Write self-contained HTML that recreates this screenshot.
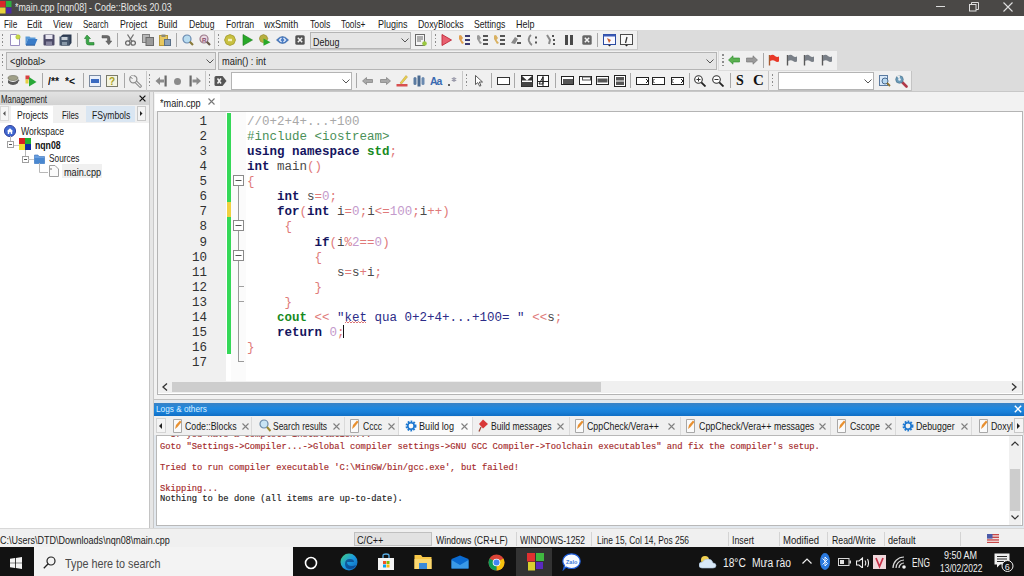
<!DOCTYPE html><html><head><meta charset="utf-8"><style>
*{margin:0;padding:0;box-sizing:border-box}
html,body{width:1024px;height:576px;overflow:hidden;background:#f0f0f0;font-family:"Liberation Sans",sans-serif;font-size:10px;color:#000}
.a{position:absolute}
.t{position:absolute;white-space:pre;line-height:1;transform-origin:0 0}
.code{font-family:"Liberation Mono",monospace;font-size:12.5px}
.kw{color:#14145e;font-weight:bold}
.op{color:#e07a7a}
.nm{color:#c49acc}
.id{color:#4a4a4a}
.cm{color:#a8a8a8}
.pp{color:#4a9058}
.uk{color:#178a1e;font-weight:bold}
.st{color:#2c2c88}
.sq{text-decoration:underline wavy #d04040;text-decoration-thickness:1px;text-underline-offset:2px}
.ln{position:absolute;width:50px;text-align:right;font-family:"Liberation Mono",monospace;font-size:12.5px;color:#303030;white-space:pre;line-height:15.06px}
.log{font-family:"Liberation Mono",monospace;font-size:8.8px;font-weight:normal;line-height:10.5px;color:#a42a2a;white-space:pre;-webkit-text-stroke:0.15px currentColor}
</style></head><body>
<div class="a" style="left:0px;top:0px;width:1024px;height:15.6px;background:#4a4846;"></div>
<svg class="a" style="left:0px;top:1px" width="12" height="13" viewBox="0 0 12 13"><rect x="0" y="0" width="5.5" height="6" fill="#d8282a"/><rect x="6" y="0" width="5.5" height="6" fill="#2cb040"/><rect x="0" y="6.5" width="5.5" height="6" fill="#e8d23a"/><rect x="6" y="6.5" width="5.5" height="6" fill="#4a2aa0"/></svg>
<div class="t" style="left:15.0px;top:2px;font-size:11px;color:#e8e8e8;transform:scaleX(0.808);">*main.cpp [nqn08] - Code::Blocks 20.03</div>
<div class="a" style="left:936px;top:6px;width:9px;height:1px;background:#dddddd;"></div>
<svg class="a" style="left:969px;top:2px" width="10" height="10" viewBox="0 0 10 10"><rect x="0.5" y="2.5" width="6.5" height="6.5" fill="none" stroke="#ddd"/><path d="M2.5 2.5V0.5H9.5V7.5H7" fill="none" stroke="#ddd"/></svg>
<svg class="a" style="left:1003px;top:2px" width="10" height="10" viewBox="0 0 10 10"><path d="M0.5 0.5L9.5 9.5M9.5 0.5L0.5 9.5" stroke="#e0e0e0" stroke-width="1.1"/></svg>
<div class="a" style="left:0px;top:15.6px;width:1024px;height:14.4px;background:#ffffff;"></div>
<div class="t" style="left:3.5px;top:18.5px;font-size:10.5px;color:#1a1a1a;transform:scaleX(0.781);">File</div>
<div class="t" style="left:27.2px;top:18.5px;font-size:10.5px;color:#1a1a1a;transform:scaleX(0.829);">Edit</div>
<div class="t" style="left:52.7px;top:18.5px;font-size:10.5px;color:#1a1a1a;transform:scaleX(0.852);">View</div>
<div class="t" style="left:82.6px;top:18.5px;font-size:10.5px;color:#1a1a1a;transform:scaleX(0.764);">Search</div>
<div class="t" style="left:119.5px;top:18.5px;font-size:10.5px;color:#1a1a1a;transform:scaleX(0.832);">Project</div>
<div class="t" style="left:158.0px;top:18.5px;font-size:10.5px;color:#1a1a1a;transform:scaleX(0.835);">Build</div>
<div class="t" style="left:188.8px;top:18.5px;font-size:10.5px;color:#1a1a1a;transform:scaleX(0.824);">Debug</div>
<div class="t" style="left:225.7px;top:18.5px;font-size:10.5px;color:#1a1a1a;transform:scaleX(0.83);">Fortran</div>
<div class="t" style="left:264.44px;top:18.5px;font-size:10.5px;color:#1a1a1a;transform:scaleX(0.861);">wxSmith</div>
<div class="t" style="left:310.0px;top:18.5px;font-size:10.5px;color:#1a1a1a;transform:scaleX(0.829);">Tools</div>
<div class="t" style="left:340.8px;top:18.5px;font-size:10.5px;color:#1a1a1a;transform:scaleX(0.799);">Tools+</div>
<div class="t" style="left:377.6px;top:18.5px;font-size:10.5px;color:#1a1a1a;transform:scaleX(0.856);">Plugins</div>
<div class="t" style="left:417.6px;top:18.5px;font-size:10.5px;color:#1a1a1a;transform:scaleX(0.833);">DoxyBlocks</div>
<div class="t" style="left:474.2px;top:18.5px;font-size:10.5px;color:#1a1a1a;transform:scaleX(0.825);">Settings</div>
<div class="t" style="left:516.4px;top:18.5px;font-size:10.5px;color:#1a1a1a;transform:scaleX(0.856);">Help</div>
<div class="a" style="left:0px;top:30px;width:1024px;height:62px;background:#dcdcdc;"></div>
<div class="a" style="left:0px;top:31px;width:638px;height:19px;background:#f0f0f0;border-bottom:1px solid #c8c8c8;border-right:1px solid #c8c8c8"></div>
<div class="a" style="left:1.5px;top:34.0px;width:1.5px;height:1.5px;background:#8c8c8c;"></div>
<div class="a" style="left:1.5px;top:37.5px;width:1.5px;height:1.5px;background:#8c8c8c;"></div>
<div class="a" style="left:1.5px;top:41.0px;width:1.5px;height:1.5px;background:#8c8c8c;"></div>
<div class="a" style="left:1.5px;top:44.5px;width:1.5px;height:1.5px;background:#8c8c8c;"></div>
<svg class="a" style="left:9px;top:34px" width="12" height="12" viewBox="0 0 12 12"><path d="M1.5 0.5H7.5L10.5 3.5V11.5H1.5Z" fill="#fff" stroke="#9a8ec0"/><circle cx="9" cy="3" r="2.2" fill="#c8d84a" stroke="#a8b830" stroke-width=".6"/></svg>
<svg class="a" style="left:25px;top:34px" width="13" height="12" viewBox="0 0 13 12"><path d="M0.5 2.5H4.5L5.5 3.5H10.5V5H3L0.5 11Z" fill="#5a9ad8"/><path d="M0.5 11L3 5H12.5L10 11Z" fill="#3a7cc8"/><path d="M1 11.2H10" stroke="#2a5a98"/></svg>
<svg class="a" style="left:43px;top:34px" width="12" height="12" viewBox="0 0 12 12"><rect x="0.5" y="0.5" width="11" height="11" rx="1" fill="#4d4b68"/><rect x="2.5" y="1" width="7" height="4" fill="#e8e6f0"/><rect x="3" y="7.5" width="6" height="4" fill="#8886a0"/></svg>
<svg class="a" style="left:59px;top:34px" width="13" height="12" viewBox="0 0 13 12"><path d="M2 2L4 0.5H12.5V9L10.5 11.5H2Z" fill="#2c3a50"/><path d="M0.5 2.5H10.5V11.5H0.5Z" fill="#48586e"/><rect x="2.5" y="3" width="6" height="3" fill="#c8d0d8"/><rect x="3" y="8" width="5" height="3" fill="#8898a8"/></svg>
<div class="a" style="left:77px;top:33px;width:1px;height:14px;background:#a8a8a8;"></div>
<svg class="a" style="left:84px;top:34px" width="11" height="12" viewBox="0 0 11 12"><path d="M3 1L0.5 4.5H2.2V8.5Q2.2 11 5 11H10V8.5H5.2Q4.8 8.5 4.8 8V4.5H6.5Z" fill="#3aa848" stroke="#267a30" stroke-width=".6"/></svg>
<svg class="a" style="left:101px;top:34px" width="11" height="12" viewBox="0 0 11 12"><path d="M1 1.5H6Q9 1.5 9 4.5V7H10.8L7.8 10.8L4.8 7H6.5V4.8Q6.5 4 5.8 4H1Z" fill="#6a6a6a" stroke="#505050" stroke-width=".5"/></svg>
<div class="a" style="left:117px;top:33px;width:1px;height:14px;background:#a8a8a8;"></div>
<svg class="a" style="left:125px;top:34px" width="11" height="12" viewBox="0 0 11 12"><circle cx="2.8" cy="9" r="2.2" fill="none" stroke="#6a6a6a" stroke-width="1.3"/><circle cx="8.2" cy="9" r="2.2" fill="none" stroke="#6a6a6a" stroke-width="1.3"/><path d="M4 7.5L8.5 0.5M7 7.5L2.5 0.5" stroke="#707070" stroke-width="1.3"/></svg>
<svg class="a" style="left:142px;top:34px" width="12" height="12" viewBox="0 0 12 12"><rect x="0.5" y="0.5" width="7" height="8" fill="#b8b8b8" stroke="#808080"/><rect x="4" y="3.5" width="7.5" height="8" fill="#9a9a9a" stroke="#6a6a6a"/></svg>
<svg class="a" style="left:159px;top:34px" width="12" height="12" viewBox="0 0 12 12"><rect x="0.5" y="1.5" width="8" height="10" fill="#e8c860" stroke="#b89838"/><rect x="2.5" y="0.5" width="4" height="2.5" fill="#8a8a7a"/><rect x="5.5" y="5.5" width="6" height="6" fill="#8aa0b8" stroke="#5a7088"/></svg>
<div class="a" style="left:176px;top:33px;width:1px;height:14px;background:#a8a8a8;"></div>
<svg class="a" style="left:182px;top:34px" width="12" height="12" viewBox="0 0 12 12"><circle cx="5" cy="5" r="4" fill="#b8dcf0" stroke="#6a8ab0" stroke-width="1.2"/><path d="M7.8 7.8L11 11" stroke="#8a7a3a" stroke-width="2.2"/></svg>
<svg class="a" style="left:199px;top:34px" width="12" height="12" viewBox="0 0 12 12"><circle cx="5" cy="5" r="4" fill="#e8d8e0" stroke="#9a7a8a" stroke-width="1.2"/><text x="3" y="7.5" font-size="6" font-weight="bold" fill="#8a4a6a" font-family="Liberation Sans">R</text><path d="M7.8 7.8L11 11" stroke="#6a5a4a" stroke-width="2.2"/></svg>
<div class="a" style="left:214px;top:31px;width:1px;height:18px;background:#c8c8c8;"></div>
<div class="a" style="left:217.5px;top:34.0px;width:1.5px;height:1.5px;background:#8c8c8c;"></div>
<div class="a" style="left:217.5px;top:37.5px;width:1.5px;height:1.5px;background:#8c8c8c;"></div>
<div class="a" style="left:217.5px;top:41.0px;width:1.5px;height:1.5px;background:#8c8c8c;"></div>
<div class="a" style="left:217.5px;top:44.5px;width:1.5px;height:1.5px;background:#8c8c8c;"></div>
<svg class="a" style="left:224px;top:34px" width="12" height="12" viewBox="0 0 12 12"><path d="M6 0.5L9.9 2.1L11.5 6L9.9 9.9L6 11.5L2.1 9.9L0.5 6L2.1 2.1Z" fill="#c8c040" stroke="#9a9020" stroke-width=".7"/><rect x="4" y="4.8" width="4" height="2.4" fill="#f4f0c0"/></svg>
<svg class="a" style="left:242px;top:34px" width="11" height="12" viewBox="0 0 11 12"><path d="M1 0.5L10.5 6L1 11.5Z" fill="#28a828" stroke="#1a7a1a" stroke-width=".6"/></svg>
<svg class="a" style="left:259px;top:34px" width="12" height="12" viewBox="0 0 12 12"><path d="M4.5 0.5L7.5 1.8L8.8 4.5L7.5 7.5L4.5 8.8L1.5 7.5L0.3 4.5L1.5 1.8Z" fill="#b8b040" stroke="#8a8020" stroke-width=".6"/><path d="M4.5 4.5L11.5 8.2L4.5 11.8Z" fill="#28a828"/></svg>
<svg class="a" style="left:276px;top:35px" width="13" height="10" viewBox="0 0 13 10"><path d="M0.5 5Q6.5 -2 12.5 5Q6.5 12 0.5 5Z" fill="#4a7cc4" stroke="#2a5a98" stroke-width=".6"/><path d="M5.5 3L3.5 5L5.5 7M7.5 3L9.5 5L7.5 7" fill="none" stroke="#eef4ff" stroke-width="1.1"/></svg>
<svg class="a" style="left:295px;top:35px" width="10" height="10" viewBox="0 0 10 10"><rect x="0.3" y="0.3" width="9.4" height="9.4" rx="1.5" fill="#555"/><path d="M2.8 2.8L7.2 7.2M7.2 2.8L2.8 7.2" stroke="#f4f4f4" stroke-width="1.5"/></svg>
<div class="a" style="left:310px;top:32px;width:101px;height:17px;background:#e5e5e5;border:1px solid #b4b4b4"></div>
<div class="t" style="left:312.9px;top:36.5px;font-size:10.5px;color:#1a1a1a;transform:scaleX(0.853);">Debug</div>
<svg class="a" style="left:401px;top:38px" width="8" height="5" viewBox="0 0 8 5"><path d="M0.5 0.5L4 4L7.5 0.5" fill="none" stroke="#555" stroke-width="1"/></svg>
<svg class="a" style="left:415px;top:34px" width="12" height="12" viewBox="0 0 12 12"><rect x="0.5" y="0.5" width="9" height="11" fill="#f4f4f4" stroke="#6a6a6a"/><path d="M2 3H8M2 5H8M2 7H6" stroke="#6a6a6a"/><circle cx="9.5" cy="9.5" r="2.3" fill="#9ac840"/></svg>
<div class="a" style="left:431px;top:31px;width:1px;height:18px;background:#c8c8c8;"></div>
<div class="a" style="left:434.5px;top:34.0px;width:1.5px;height:1.5px;background:#8c8c8c;"></div>
<div class="a" style="left:434.5px;top:37.5px;width:1.5px;height:1.5px;background:#8c8c8c;"></div>
<div class="a" style="left:434.5px;top:41.0px;width:1.5px;height:1.5px;background:#8c8c8c;"></div>
<div class="a" style="left:434.5px;top:44.5px;width:1.5px;height:1.5px;background:#8c8c8c;"></div>
<svg class="a" style="left:441px;top:34px" width="11" height="12" viewBox="0 0 11 12"><path d="M1 0.5L10.5 6L1 11.5Z" fill="#e86070" stroke="#c02838" stroke-width=".9"/></svg>
<svg class="a" style="left:458px;top:34px" width="13" height="12" viewBox="0 0 13 12"><path d="M1 1.5L3 1L5 4L3.5 6L6 9L4 10L1 5Z" fill="#e0a050"/><rect x="7" y="1" width="5" height="2" fill="#3a3a70"/><rect x="7" y="5" width="5" height="2" fill="#3a3a70"/><rect x="7" y="9" width="5" height="2" fill="#3a3a70"/></svg>
<svg class="a" style="left:476px;top:34px" width="13" height="12" viewBox="0 0 13 12"><path d="M1 1.5L3 1L5 4L3.5 6L6 9L4 10L1 5Z" fill="#9a9a9a"/><rect x="7" y="1" width="5" height="2" fill="#555"/><rect x="7" y="5" width="5" height="2" fill="#555"/><rect x="7" y="9" width="5" height="2" fill="#555"/></svg>
<svg class="a" style="left:493px;top:34px" width="13" height="12" viewBox="0 0 13 12"><path d="M1 1.5L3 1L5 4L3.5 6L6 9L4 10L1 5Z" fill="#d8b060"/><rect x="7" y="1" width="5" height="2" fill="#555"/><rect x="7" y="5" width="5" height="2" fill="#555"/><rect x="7" y="9" width="5" height="2" fill="#555"/></svg>
<svg class="a" style="left:510px;top:34px" width="12" height="12" viewBox="0 0 12 12"><path d="M1 9L5 3L8 5L5 10Z" fill="#8a8a8a"/><rect x="7" y="1" width="4" height="2" fill="#555"/><rect x="7" y="8" width="4" height="2" fill="#555"/></svg>
<svg class="a" style="left:527px;top:34px" width="12" height="12" viewBox="0 0 12 12"><path d="M4 1Q1 3 2 7Q3 10 5 11" fill="none" stroke="#8a8a8a" stroke-width="2"/><rect x="8" y="2.5" width="2" height="2" fill="#555"/><rect x="8" y="7.5" width="2" height="2" fill="#555"/></svg>
<svg class="a" style="left:545px;top:34px" width="12" height="12" viewBox="0 0 12 12"><path d="M2 1L5 6L4 10" fill="none" stroke="#8a8a8a" stroke-width="2"/><rect x="7" y="1" width="2" height="2" fill="#555"/><rect x="8" y="5" width="2" height="2" fill="#555"/><rect x="8" y="9" width="2" height="2" fill="#555"/></svg>
<svg class="a" style="left:564px;top:34px" width="10" height="12" viewBox="0 0 10 12"><rect x="1" y="1" width="3" height="10" fill="#4a4a4a"/><rect x="6" y="1" width="3" height="10" fill="#4a4a4a"/></svg>
<svg class="a" style="left:582px;top:35px" width="10" height="10" viewBox="0 0 10 10"><rect x="0.3" y="0.3" width="9.4" height="9.4" rx="1.5" fill="#666"/><path d="M2.8 2.8L7.2 7.2M7.2 2.8L2.8 7.2" stroke="#f4f4f4" stroke-width="1.5"/></svg>
<div class="a" style="left:597px;top:33px;width:1px;height:14px;background:#a8a8a8;"></div>
<svg class="a" style="left:603px;top:34px" width="13" height="13" viewBox="0 0 13 13"><rect x="0.5" y="0.5" width="12" height="10" fill="#f8f8ff" stroke="#2a4aa0"/><rect x="0.5" y="0.5" width="12" height="2" fill="#3a5ab8"/><path d="M4 4L8 6L6 9Z" fill="#c86030"/><path d="M5 11L6.5 12.5L8 11Z" fill="#222"/></svg>
<svg class="a" style="left:620px;top:34px" width="13" height="13" viewBox="0 0 13 13"><rect x="0.5" y="0.5" width="12" height="10" fill="#f8f8f8" stroke="#4a4a4a"/><path d="M7 3L5.5 9" stroke="#333" stroke-width="1.3"/><path d="M5 11L6.5 12.5L8 11Z" fill="#222"/></svg>
<div class="a" style="left:0px;top:51px;width:718px;height:20px;background:#f0f0f0;"></div>
<div class="a" style="left:1.5px;top:54.0px;width:1.5px;height:1.5px;background:#8c8c8c;"></div>
<div class="a" style="left:1.5px;top:57.5px;width:1.5px;height:1.5px;background:#8c8c8c;"></div>
<div class="a" style="left:1.5px;top:61.0px;width:1.5px;height:1.5px;background:#8c8c8c;"></div>
<div class="a" style="left:1.5px;top:64.5px;width:1.5px;height:1.5px;background:#8c8c8c;"></div>
<div class="a" style="left:6px;top:52px;width:210px;height:18px;background:#e5e5e5;border:1px solid #b4b4b4"></div>
<div class="t" style="left:9.7px;top:56px;font-size:10.5px;color:#1a1a1a;transform:scaleX(0.881);">&lt;global&gt;</div>
<svg class="a" style="left:206px;top:59px" width="8" height="5" viewBox="0 0 8 5"><path d="M0.5 0.5L4 4L7.5 0.5" fill="none" stroke="#555" stroke-width="1"/></svg>
<div class="a" style="left:218px;top:52px;width:499px;height:18px;background:#e5e5e5;border:1px solid #b4b4b4"></div>
<div class="t" style="left:222.4px;top:56px;font-size:10.5px;color:#1a1a1a;transform:scaleX(0.883);">main() : int</div>
<svg class="a" style="left:706px;top:59px" width="8" height="5" viewBox="0 0 8 5"><path d="M0.5 0.5L4 4L7.5 0.5" fill="none" stroke="#555" stroke-width="1"/></svg>
<div class="a" style="left:719px;top:51px;width:118px;height:19px;background:#f0f0f0;"></div>
<div class="a" style="left:722px;top:54.0px;width:1.5px;height:1.5px;background:#8c8c8c;"></div>
<div class="a" style="left:722px;top:57.5px;width:1.5px;height:1.5px;background:#8c8c8c;"></div>
<div class="a" style="left:722px;top:61.0px;width:1.5px;height:1.5px;background:#8c8c8c;"></div>
<div class="a" style="left:722px;top:64.5px;width:1.5px;height:1.5px;background:#8c8c8c;"></div>
<svg class="a" style="left:728px;top:55px" width="12" height="10" viewBox="0 0 12 10"><path d="M0.5 5L5 0.8V3H11.5V7H5V9.2Z" fill="#5ab050" stroke="#2a8a2a" stroke-width=".6"/></svg>
<svg class="a" style="left:746px;top:55px" width="12" height="10" viewBox="0 0 12 10"><path d="M11.5 5L7 0.8V3H0.5V7H7V9.2Z" fill="#9a9a9a" stroke="#707070" stroke-width=".6"/></svg>
<div class="a" style="left:763px;top:53px;width:1px;height:15px;background:#a8a8a8;"></div>
<svg class="a" style="left:768px;top:54px" width="12" height="12" viewBox="0 0 12 12"><path d="M1.5 11.5V1" stroke="#a85a30" stroke-width="1.4"/><path d="M2 1.5Q5 0 7 2Q9 3.5 11 2.5V7.5Q9 8.5 7 7Q5 5.5 2 7Z" fill="#e83828"/></svg>
<svg class="a" style="left:786px;top:54px" width="12" height="12" viewBox="0 0 12 12"><path d="M1.5 11.5V1" stroke="#5a5a5a" stroke-width="1.4"/><path d="M2 1.5Q5 0 7 2Q9 3.5 11 2.5V7.5Q9 8.5 7 7Q5 5.5 2 7Z" fill="#7a8088"/></svg>
<svg class="a" style="left:803px;top:54px" width="12" height="12" viewBox="0 0 12 12"><path d="M1.5 11.5V1" stroke="#5a5a5a" stroke-width="1.4"/><path d="M2 1.5Q5 0 7 2Q9 3.5 11 2.5V7.5Q9 8.5 7 7Q5 5.5 2 7Z" fill="#7a8088"/></svg>
<svg class="a" style="left:821px;top:54px" width="12" height="12" viewBox="0 0 12 12"><path d="M1.5 11.5V1" stroke="#5a5a5a" stroke-width="1.4"/><path d="M2 1.5Q5 0 7 2Q9 3.5 11 2.5V7.5Q9 8.5 7 7Q5 5.5 2 7Z" fill="#7a8088"/></svg>
<div class="a" style="left:0px;top:71px;width:912px;height:20px;background:#f0f0f0;border-bottom:1px solid #c0c0c0;border-right:1px solid #c4c4c4"></div>
<div class="a" style="left:1.5px;top:74.0px;width:1.5px;height:1.5px;background:#8c8c8c;"></div>
<div class="a" style="left:1.5px;top:77.5px;width:1.5px;height:1.5px;background:#8c8c8c;"></div>
<div class="a" style="left:1.5px;top:81.0px;width:1.5px;height:1.5px;background:#8c8c8c;"></div>
<div class="a" style="left:1.5px;top:84.5px;width:1.5px;height:1.5px;background:#8c8c8c;"></div>
<svg class="a" style="left:7px;top:75px" width="13" height="12" viewBox="0 0 13 12"><ellipse cx="6" cy="3" rx="5" ry="2.5" fill="#a0a088" stroke="#6a6a5a" stroke-width=".6"/><path d="M1 5Q6 9 11 5V8Q6 12 1 8Z" fill="#5a5a5a"/><path d="M11 4L12.5 5.5L11 7" fill="#6a6a6a"/></svg>
<svg class="a" style="left:25px;top:75px" width="12" height="12" viewBox="0 0 12 12"><rect x="0.5" y="0.5" width="4" height="4" fill="#d84040"/><rect x="0.5" y="4.5" width="3" height="4" fill="#e8d040"/><path d="M4 2L11.5 7L4 11.5Z" fill="#28a838"/></svg>
<div class="a" style="left:42px;top:73px;width:1px;height:15px;background:#a8a8a8;"></div>
<div class="t" style="left:48px;top:76px;font-size:11.5px;color:#111;transform:scaleX(0.9);font-weight:bold">/**</div>
<div class="t" style="left:65px;top:76px;font-size:11.5px;color:#111;transform:scaleX(0.9);font-weight:bold">*&lt;</div>
<div class="a" style="left:83px;top:73px;width:1px;height:15px;background:#a8a8a8;"></div>
<svg class="a" style="left:89px;top:75px" width="12" height="12" viewBox="0 0 12 12"><rect x="0.5" y="0.5" width="11" height="11" fill="#eaf0fa" stroke="#7a8aa0"/><rect x="2" y="4" width="8" height="4" fill="#3a6ac0"/></svg>
<svg class="a" style="left:106px;top:75px" width="12" height="12" viewBox="0 0 12 12"><rect x="0.5" y="0.5" width="11" height="11" fill="#f4f4e0" stroke="#7a7a6a"/><text x="3" y="10" font-size="10" font-weight="bold" fill="#a8a020" font-family="Liberation Sans">?</text></svg>
<div class="a" style="left:124px;top:73px;width:1px;height:15px;background:#a8a8a8;"></div>
<svg class="a" style="left:129px;top:75px" width="13" height="13" viewBox="0 0 13 13"><path d="M6.2 6.2L11.2 11.2" stroke="#8a8a8a" stroke-width="3.2" stroke-linecap="round"/><path d="M6.2 6.2L11.2 11.2" stroke="#f0f0f0" stroke-width="1.2" stroke-linecap="round"/><circle cx="4.3" cy="4.3" r="3.6" fill="#f0f0f0" stroke="#8a8a8a" stroke-width="1.2"/><path d="M4.3 4.3L1.5 1.2L4.8 0.3Z" fill="#f0f0f0"/><path d="M1.3 1.5L3.5 4" stroke="#8a8a8a" stroke-width="1"/></svg>
<div class="a" style="left:146px;top:71px;width:1px;height:20px;background:#c8c8c8;"></div>
<div class="a" style="left:148.5px;top:74.0px;width:1.5px;height:1.5px;background:#8c8c8c;"></div>
<div class="a" style="left:148.5px;top:77.5px;width:1.5px;height:1.5px;background:#8c8c8c;"></div>
<div class="a" style="left:148.5px;top:81.0px;width:1.5px;height:1.5px;background:#8c8c8c;"></div>
<div class="a" style="left:148.5px;top:84.5px;width:1.5px;height:1.5px;background:#8c8c8c;"></div>
<svg class="a" style="left:155px;top:75px" width="13" height="12" viewBox="0 0 13 12"><path d="M0.5 6L5 2V4.5H9V7.5H5V10Z" fill="#8a8a8a"/><rect x="9.5" y="0.5" width="2.2" height="11" fill="#6a6a6a"/></svg>
<svg class="a" style="left:173px;top:77px" width="9" height="9" viewBox="0 0 9 9"><circle cx="4.5" cy="4.5" r="3.5" fill="#8a8a8a"/></svg>
<svg class="a" style="left:189px;top:75px" width="13" height="12" viewBox="0 0 13 12"><rect x="0.5" y="0.5" width="2.2" height="11" fill="#6a6a6a"/><path d="M12 6L7.5 2V4.5H3.5V7.5H7.5V10Z" fill="#8a8a8a"/></svg>
<div class="a" style="left:205px;top:71px;width:1px;height:20px;background:#c8c8c8;"></div>
<div class="a" style="left:208.5px;top:74.0px;width:1.5px;height:1.5px;background:#8c8c8c;"></div>
<div class="a" style="left:208.5px;top:77.5px;width:1.5px;height:1.5px;background:#8c8c8c;"></div>
<div class="a" style="left:208.5px;top:81.0px;width:1.5px;height:1.5px;background:#8c8c8c;"></div>
<div class="a" style="left:208.5px;top:84.5px;width:1.5px;height:1.5px;background:#8c8c8c;"></div>
<svg class="a" style="left:214px;top:75px" width="13" height="12" viewBox="0 0 13 12"><path d="M0.5 2.5Q0.5 1 2 1H8.5L12.5 6L8.5 11H2Q0.5 11 0.5 9.5Z" fill="#555"/><path d="M3.5 3.5L7 8.5M7 3.5L3.5 8.5" stroke="#f0f0f0" stroke-width="1.5"/></svg>
<div class="a" style="left:231px;top:72px;width:121px;height:18px;background:#ffffff;border:1px solid #b4b4b4"></div>
<svg class="a" style="left:341.5px;top:79px" width="8" height="5" viewBox="0 0 8 5"><path d="M0.5 0.5L4 4L7.5 0.5" fill="none" stroke="#555" stroke-width="1"/></svg>
<div class="a" style="left:356px;top:73px;width:1px;height:15px;background:#a8a8a8;"></div>
<svg class="a" style="left:362px;top:76px" width="11" height="10" viewBox="0 0 11 10"><path d="M0.5 5L4.5 1.5V3.5H10.5V6.5H4.5V8.5Z" fill="#a8a8a8" stroke="#707070" stroke-width=".6"/></svg>
<svg class="a" style="left:380px;top:76px" width="11" height="10" viewBox="0 0 11 10"><path d="M10.5 5L6.5 1.5V3.5H0.5V6.5H6.5V8.5Z" fill="#a8a8a8" stroke="#707070" stroke-width=".6"/></svg>
<svg class="a" style="left:396px;top:75px" width="12" height="12" viewBox="0 0 12 12"><path d="M4 8L10 0.5L11.5 2L5.5 9Z" fill="#e8d050" stroke="#b89830" stroke-width=".5"/><rect x="0.5" y="9" width="11" height="2.5" fill="#d85050"/></svg>
<svg class="a" style="left:413px;top:75px" width="12" height="12" viewBox="0 0 12 12"><rect x="0.5" y="2" width="3" height="8" rx="1.5" fill="#5a7aa0"/><rect x="4.5" y="0.5" width="3" height="11" fill="#4a6a90"/><rect x="8.5" y="2" width="3" height="8" rx="1.5" fill="#6a8ab0"/></svg>
<div class="t" style="left:430px;top:76px;font-size:11px;color:#3a6ab0;transform:scaleX(0.95);font-weight:bold;letter-spacing:-1px">Aa</div>
<svg class="a" style="left:446px;top:75px" width="12" height="12" viewBox="0 0 12 12"><circle cx="3" cy="10" r="1" fill="#333"/><path d="M8 2V7M5.8 3.2L10.2 5.8M10.2 3.2L5.8 5.8" stroke="#9a9aaa" stroke-width="1.2"/></svg>
<div class="a" style="left:462px;top:71px;width:1px;height:20px;background:#c8c8c8;"></div>
<div class="a" style="left:465.5px;top:74.0px;width:1.5px;height:1.5px;background:#8c8c8c;"></div>
<div class="a" style="left:465.5px;top:77.5px;width:1.5px;height:1.5px;background:#8c8c8c;"></div>
<div class="a" style="left:465.5px;top:81.0px;width:1.5px;height:1.5px;background:#8c8c8c;"></div>
<div class="a" style="left:465.5px;top:84.5px;width:1.5px;height:1.5px;background:#8c8c8c;"></div>
<svg class="a" style="left:475px;top:75px" width="8" height="12" viewBox="0 0 8 12"><path d="M0.5 0.5V9.5L2.8 7.6L4.6 11.2L6 10.5L4.3 7H7.5Z" fill="#fff" stroke="#333" stroke-width=".8"/></svg>
<div class="a" style="left:491px;top:73px;width:1px;height:15px;background:#a8a8a8;"></div>
<svg class="a" style="left:497px;top:77px" width="13" height="8" viewBox="0 0 13 8"><rect x="0.5" y="0.5" width="12" height="7" fill="#fff" stroke="#333"/></svg>
<div class="a" style="left:514px;top:73px;width:1px;height:15px;background:#a8a8a8;"></div>
<svg class="a" style="left:521px;top:75px" width="12" height="12" viewBox="0 0 12 12"><rect x="0.5" y="0.5" width="11" height="11" fill="#fff" stroke="#222"/><path d="M0.5 0.5L6 5.5L11.5 0.5V5.5H0.5Z" fill="#333"/><rect x="0.5" y="7" width="11" height="4.5" fill="#444"/></svg>
<svg class="a" style="left:537px;top:75px" width="12" height="12" viewBox="0 0 12 12"><rect x="0.5" y="0.5" width="11" height="11" fill="#fff" stroke="#222"/><path d="M2 9L6 2V9ZM0.5 6.5H11.5M6 0.5V11.5" fill="none" stroke="#222"/></svg>
<div class="a" style="left:555px;top:73px;width:1px;height:15px;background:#a8a8a8;"></div>
<svg class="a" style="left:561px;top:75px" width="13" height="12" viewBox="0 0 13 12"><rect x="0.5" y="1.5" width="12" height="8" fill="#fff" stroke="#222"/><rect x="2" y="4" width="10" height="5" fill="#555"/></svg>
<svg class="a" style="left:579px;top:75px" width="13" height="12" viewBox="0 0 13 12"><rect x="0.5" y="1.5" width="12" height="8" fill="#fff" stroke="#222"/><rect x="3" y="1.5" width="9" height="4" fill="#555"/><rect x="4" y="2.5" width="7" height="2" fill="#fff"/></svg>
<svg class="a" style="left:596px;top:75px" width="13" height="12" viewBox="0 0 13 12"><rect x="0.5" y="1.5" width="12" height="8" fill="#fff" stroke="#222"/><rect x="1.5" y="3.5" width="10" height="4" fill="#555"/></svg>
<svg class="a" style="left:614px;top:75px" width="13" height="12" viewBox="0 0 13 12"><rect x="0.5" y="0.5" width="11" height="11" fill="#fff" stroke="#222"/><rect x="2" y="2" width="8" height="8" fill="#555"/><path d="M2 6H10" stroke="#fff"/></svg>
<div class="a" style="left:630px;top:73px;width:1px;height:15px;background:#a8a8a8;"></div>
<svg class="a" style="left:636px;top:75px" width="13" height="12" viewBox="0 0 13 12"><rect x="0.5" y="2.5" width="12" height="7" fill="#fff" stroke="#222"/><path d="M10 4L12 6L10 8" fill="none" stroke="#222"/></svg>
<svg class="a" style="left:652px;top:75px" width="13" height="12" viewBox="0 0 13 12"><rect x="0.5" y="2.5" width="12" height="7" fill="#fff" stroke="#222"/><path d="M2.5 4L0.5 6L2.5 8" fill="none" stroke="#222"/></svg>
<svg class="a" style="left:671px;top:75px" width="13" height="12" viewBox="0 0 13 12"><rect x="0.5" y="2.5" width="12" height="7" fill="#fff" stroke="#222"/><path d="M2.5 4L0.5 6L2.5 8M10 4L12 6L10 8" fill="none" stroke="#222"/></svg>
<div class="a" style="left:689px;top:73px;width:1px;height:15px;background:#a8a8a8;"></div>
<svg class="a" style="left:694px;top:75px" width="12" height="12" viewBox="0 0 12 12"><circle cx="4.5" cy="4.5" r="3.8" fill="#fff" stroke="#333" stroke-width="1.1"/><path d="M2.5 4.5H6.5M4.5 2.5V6.5" stroke="#333"/><path d="M7.3 7.3L11.5 11.5" stroke="#222" stroke-width="1.8"/></svg>
<svg class="a" style="left:712px;top:75px" width="12" height="12" viewBox="0 0 12 12"><circle cx="4.5" cy="4.5" r="3.8" fill="#fff" stroke="#333" stroke-width="1.1"/><path d="M2.5 4.5H6.5" stroke="#333"/><path d="M7.3 7.3L11.5 11.5" stroke="#222" stroke-width="1.8"/></svg>
<div class="a" style="left:730px;top:73px;width:1px;height:15px;background:#a8a8a8;"></div>
<div class="t" style="left:736px;top:74px;font-size:14px;color:#111;font-family:'Liberation Serif',serif;font-weight:bold">S</div>
<div class="t" style="left:753px;top:73px;font-size:15px;color:#111;font-family:'Liberation Serif',serif;font-weight:bold">C</div>
<div class="a" style="left:768px;top:71px;width:1px;height:20px;background:#c8c8c8;"></div>
<div class="a" style="left:771.5px;top:74.0px;width:1.5px;height:1.5px;background:#8c8c8c;"></div>
<div class="a" style="left:771.5px;top:77.5px;width:1.5px;height:1.5px;background:#8c8c8c;"></div>
<div class="a" style="left:771.5px;top:81.0px;width:1.5px;height:1.5px;background:#8c8c8c;"></div>
<div class="a" style="left:771.5px;top:84.5px;width:1.5px;height:1.5px;background:#8c8c8c;"></div>
<div class="a" style="left:778px;top:72px;width:96px;height:18px;background:#ffffff;border:1px solid #b4b4b4"></div>
<svg class="a" style="left:864px;top:79px" width="8" height="5" viewBox="0 0 8 5"><path d="M0.5 0.5L4 4L7.5 0.5" fill="none" stroke="#555" stroke-width="1"/></svg>
<svg class="a" style="left:879px;top:75px" width="12" height="12" viewBox="0 0 12 12"><rect x="0.5" y="0.5" width="8" height="10" fill="#d8e8f8" stroke="#5a7aa0"/><circle cx="6" cy="6" r="3" fill="#b8d8f0" stroke="#4a6a90"/><path d="M8 8L11 11" stroke="#8a7030" stroke-width="1.8"/></svg>
<svg class="a" style="left:895px;top:75px" width="13" height="13" viewBox="0 0 13 13"><path d="M6.5 6.5L11.5 11.5" stroke="#b03848" stroke-width="2.6" stroke-linecap="round"/><circle cx="4.5" cy="4.5" r="3.8" fill="#6a9ab8" stroke="#4a7088" stroke-width=".6"/><path d="M4.5 4.5L1.5 0.8L5 0.6Z" fill="#f0f0f0"/><circle cx="4.5" cy="4.5" r="1.3" fill="#e8f0f4"/></svg>
<div class="a" style="left:0px;top:91px;width:1024px;height:1px;background:#c8c8c8;"></div>
<div class="a" style="left:0px;top:92px;width:149px;height:436px;background:#ffffff;"></div>
<div class="a" style="left:0;top:92px;width:149px;height:13px;background:linear-gradient(#e2e2e2,#d2d2d2)"></div>
<div class="t" style="left:1.0px;top:94px;font-size:10.5px;color:#222;transform:scaleX(0.75);">Management</div>
<svg class="a" style="left:139px;top:95px" width="7" height="7" viewBox="0 0 7 7"><path d="M0.6 0.6L6.4 6.4M6.4 0.6L0.6 6.4" stroke="#111" stroke-width="1.2"/></svg>
<div class="a" style="left:0px;top:105px;width:149px;height:18px;background:#f0f0f0;"></div>
<div class="a" style="left:0px;top:106px;width:9px;height:15px;background:#f6f6f6;border:1px solid #dadada"></div>
<svg class="a" style="left:3px;top:111px" width="3" height="5" viewBox="0 0 3 5"><path d="M2.5 0L0 2.5L2.5 5Z" fill="#555"/></svg>
<div class="a" style="left:11px;top:106px;width:42px;height:17px;background:#ffffff;"></div>
<div class="a" style="left:53px;top:106px;width:33px;height:16px;background:#f0f0f0;"></div>
<div class="a" style="left:86px;top:106px;width:49px;height:16px;background:#dae6f2;"></div>
<div class="a" style="left:137px;top:106px;width:9px;height:15px;background:#f4f4f4;border:1px solid #c8c8c8"></div>
<svg class="a" style="left:140px;top:111px" width="3" height="5" viewBox="0 0 3 5"><path d="M0 0L2.5 2.5L0 5Z" fill="#222"/></svg>
<div class="t" style="left:16.8px;top:110px;font-size:10.5px;color:#1a1a1a;transform:scaleX(0.819);">Projects</div>
<div class="t" style="left:61.5px;top:110px;font-size:10.5px;color:#1a1a1a;transform:scaleX(0.758);">Files</div>
<div class="t" style="left:91.9px;top:110px;font-size:10.5px;color:#1a1a1a;transform:scaleX(0.82);">FSymbols</div>
<svg class="a" style="left:4px;top:124.5px" width="12" height="12" viewBox="0 0 12 12"><circle cx="6" cy="6" r="5.6" fill="#4068d0" stroke="#2a3a98" stroke-width=".9"/><path d="M2.8 6.3L6 3.2L9.2 6.3H8.2V9H6.8V7.3H5.2V9H3.8V6.3Z" fill="#fff"/></svg>
<div class="t" style="left:20.8px;top:126px;font-size:10.5px;color:#1a1a1a;transform:scaleX(0.823);">Workspace</div>
<div class="a" style="left:10px;top:136px;width:1px;height:8px;background:#b8b8b8;"></div>
<svg class="a" style="left:7px;top:141px" width="7" height="7" viewBox="0 0 7 7"><rect x="0.5" y="0.5" width="6" height="6" fill="#fff" stroke="#a0a0a0"/><path d="M2 3.5H5" stroke="#555"/></svg>
<svg class="a" style="left:19px;top:138px" width="12" height="12" viewBox="0 0 12 12"><rect x="0" y="0" width="6" height="6" fill="#d82020"/><rect x="6" y="0" width="6" height="6" fill="#20b030"/><rect x="0" y="6" width="6" height="6" fill="#f0e030"/><rect x="6" y="6" width="6" height="6" fill="#1030a0"/></svg>
<div class="t" style="left:35.1px;top:140px;font-size:10.5px;color:#111;transform:scaleX(0.828);font-weight:bold">nqn08</div>
<div class="a" style="left:25px;top:150px;width:1px;height:6px;background:#b8b8b8;"></div>
<svg class="a" style="left:21.5px;top:156px" width="7" height="7" viewBox="0 0 7 7"><rect x="0.5" y="0.5" width="6" height="6" fill="#fff" stroke="#a0a0a0"/><path d="M2 3.5H5" stroke="#555"/></svg>
<svg class="a" style="left:34px;top:153.5px" width="11" height="10" viewBox="0 0 11 10"><path d="M0.5 1H4L5 2.5H10.5V9.5H0.5Z" fill="#6aa0e0" stroke="#3a70b8" stroke-width=".6"/><path d="M0.5 4H10.5V9.5H0.5Z" fill="#4a88d0"/></svg>
<div class="t" style="left:49.2px;top:153px;font-size:10.5px;color:#1a1a1a;transform:scaleX(0.79);">Sources</div>
<svg class="a" style="left:39px;top:163px" width="10" height="11" viewBox="0 0 10 11"><path d="M0.5 0V9.5H9" fill="none" stroke="#b8b8b8"/></svg>
<div class="a" style="left:14px;top:145px;width:5px;height:1px;background:#c8c8c8;"></div>
<div class="a" style="left:28px;top:159px;width:6px;height:1px;background:#c8c8c8;"></div>
<svg class="a" style="left:49px;top:165px" width="10" height="12" viewBox="0 0 10 12"><path d="M0.5 0.5H6L9.5 4V11.5H0.5Z" fill="#fbfbfb" stroke="#a0a0a0"/><path d="M2 3V5" stroke="#777"/></svg>
<div class="a" style="left:62px;top:164px;width:40px;height:14px;background:#f0f0f0;"></div>
<div class="t" style="left:63.9px;top:166.5px;font-size:10.5px;color:#1a1a1a;transform:scaleX(0.871);">main.cpp</div>
<div class="a" style="left:149px;top:92px;width:5px;height:436px;background:#e6e6e6;border-left:1px solid #c4c4c4;border-right:1px solid #c8c8c8"></div>
<div class="a" style="left:154px;top:92px;width:870px;height:308px;background:#f2f2f2;border-bottom:1px solid #c0c0c0"></div>
<div class="a" style="left:155px;top:94px;width:65px;height:17px;background:#ffffff;"></div>
<div class="t" style="left:160.0px;top:98px;font-size:10.5px;color:#1a1a1a;transform:scaleX(0.872);">*main.cpp</div>
<svg class="a" style="left:208px;top:98px" width="7" height="7" viewBox="0 0 7 7"><path d="M0.5 0.5L6.5 6.5M6.5 0.5L0.5 6.5" stroke="#777" stroke-width="1.1"/></svg>
<div class="a" style="left:157px;top:111px;width:866px;height:284px;background:#ffffff;border:1px solid #b4b4b4"></div>
<div class="a" style="left:158px;top:112px;width:68px;height:269px;background:#f0f0f0;"></div>
<div class="a" style="left:227px;top:113px;width:4.5px;height:241px;background:#35d858;"></div>
<div class="a" style="left:227px;top:202px;width:4.5px;height:15px;background:#f0d040;"></div>
<div class="a" style="left:231px;top:112px;width:15px;height:269px;background:#fbfbfb;"></div>
<svg class="a" style="left:233px;top:175px" width="11" height="11" viewBox="0 0 11 11"><rect x="0.5" y="0.5" width="10" height="10" fill="#fff" stroke="#8a8a8a"/><path d="M2.5 5.5H8.5" stroke="#555"/></svg>
<div class="a" style="left:238px;top:186px;width:1px;height:175px;background:#9a9a9a;"></div>
<svg class="a" style="left:233px;top:220px" width="11" height="11" viewBox="0 0 11 11"><rect x="0.5" y="0.5" width="10" height="10" fill="#fff" stroke="#8a8a8a"/><path d="M2.5 5.5H8.5" stroke="#555"/></svg>
<svg class="a" style="left:233px;top:250px" width="11" height="11" viewBox="0 0 11 11"><rect x="0.5" y="0.5" width="10" height="10" fill="#fff" stroke="#8a8a8a"/><path d="M2.5 5.5H8.5" stroke="#555"/></svg>
<div class="a" style="left:238px;top:286px;width:6px;height:1px;background:#a0a0a0;"></div>
<div class="a" style="left:238px;top:301px;width:6px;height:1px;background:#a0a0a0;"></div>
<div class="a" style="left:238px;top:361px;width:6px;height:1px;background:#9a9a9a;"></div>
<div class="ln" style="left:157px;top:115px">1
2
3
4
5
6
7
8
9
10
11
12
13
14
15
16
17</div>
<div class="a code" style="left:247px;top:115px;line-height:15.06px;white-space:pre"><span class="cm">//0+2+4+...+100</span>
<span class="pp">#include &lt;iostream&gt;</span>
<span class="kw">using</span> <span class="kw">namespace</span> <span class="uk">std</span><span class="op">;</span>
<span class="kw">int</span> <span class="id">main</span><span class="op">()</span>
<span class="op">{</span>
    <span class="kw">int</span> <span class="id">s</span><span class="op">=</span><span class="nm">0</span><span class="op">;</span>
    <span class="kw">for</span><span class="op">(</span><span class="kw">int</span> <span class="id">i</span><span class="op">=</span><span class="nm">0</span><span class="op">;</span><span class="id">i</span><span class="op">&lt;=</span><span class="nm">100</span><span class="op">;</span><span class="id">i</span><span class="op">++)</span>
     <span class="op">{</span>
         <span class="kw">if</span><span class="op">(</span><span class="id">i</span><span class="op">%</span><span class="nm">2</span><span class="op">==</span><span class="nm">0</span><span class="op">)</span>
         <span class="op">{</span>
            <span class="id">s</span><span class="op">=</span><span class="id">s</span><span class="op">+</span><span class="id">i</span><span class="op">;</span>
         <span class="op">}</span>
     <span class="op">}</span>
    <span class="uk">cout</span> <span class="op">&lt;&lt;</span> <span class="st">"ket qua 0+2+4+...+100= "</span> <span class="op">&lt;&lt;</span><span class="id">s</span><span class="op">;</span>
    <span class="kw">return</span> <span class="nm">0</span><span class="op">;</span>
<span class="op">}</span>
</div>
<div class="a" style="left:343px;top:325px;width:1px;height:13px;background:#111;"></div>
<svg class="a" style="left:345px;top:320.5px" width="22" height="3" viewBox="0 0 22 3"><path d="M0 2L1.5 0.5L3 2L4.5 0.5L6 2L7.5 0.5L9 2L10.5 0.5L12 2L13.5 0.5L15 2L16.5 0.5L18 2L19.5 0.5L21 2" fill="none" stroke="#d05050" stroke-width="0.8"/></svg>
<div class="a" style="left:158px;top:381px;width:864px;height:12px;background:#f0f0f0;"></div>
<svg class="a" style="left:162px;top:383px" width="6" height="8" viewBox="0 0 6 8"><path d="M5 0.5L1 4L5 7.5" fill="none" stroke="#333" stroke-width="1.3"/></svg>
<div class="a" style="left:172px;top:382px;width:429px;height:10px;background:#cdcdcd;"></div>
<svg class="a" style="left:1011px;top:383px" width="6" height="8" viewBox="0 0 6 8"><path d="M1 0.5L5 4L1 7.5" fill="none" stroke="#333" stroke-width="1.3"/></svg>
<div class="a" style="left:154px;top:400px;width:870px;height:128px;background:#e2e8ee;"></div>
<div class="a" style="left:154px;top:403px;width:870px;height:13px;background:linear-gradient(#3a82c4,#1e88e0 40%,#1a80d8 70%,#106ec4)"></div>
<div class="t" style="left:155.9px;top:403.5px;font-size:9.5px;color:#dcefff;transform:scaleX(0.867);">Logs &amp; others</div>
<svg class="a" style="left:1014px;top:405px" width="8" height="8" viewBox="0 0 8 8"><path d="M0.8 0.8L7.2 7.2M7.2 0.8L0.8 7.2" stroke="#fff" stroke-width="1.4"/></svg>
<div class="a" style="left:154px;top:416px;width:870px;height:19px;background:#f0f0f0;"></div>
<div class="a" style="left:156px;top:418px;width:10px;height:15px;background:#f4f4f4;border:1px solid #d4d4d4"></div>
<svg class="a" style="left:159px;top:423px" width="3" height="6" viewBox="0 0 3 6"><path d="M3 0L0 3L3 6Z" fill="#222"/></svg>
<div class="a" style="left:166px;top:417px;width:86px;height:18px;background:#f0f0f0;border-right:1px solid #dadada"></div>
<svg class="a" style="left:173px;top:419px" width="9" height="14" viewBox="0 0 9 14"><path d="M0.5 0.5H8.5V13.5H0.5Z" fill="#fafafa" stroke="#a8a8a8"/><path d="M2 10L3 6L7 1.5L8.5 3L4.5 8Z" fill="#e89030"/></svg>
<div class="t" style="left:185.0px;top:421px;font-size:10.5px;color:#1a1a1a;transform:scaleX(0.833);">Code::Blocks</div>
<svg class="a" style="left:242px;top:423px" width="7" height="7" viewBox="0 0 7 7"><path d="M0.5 0.5L6.5 6.5M6.5 0.5L0.5 6.5" stroke="#808080" stroke-width="1.1"/></svg>
<div class="a" style="left:252px;top:417px;width:93px;height:18px;background:#f0f0f0;border-right:1px solid #dadada"></div>
<svg class="a" style="left:259px;top:419px" width="12" height="13" viewBox="0 0 12 13"><circle cx="5" cy="5" r="4" fill="#c8e4f4" stroke="#6a8aa8" stroke-width="1.2"/><path d="M8 8L11.5 12" stroke="#9a8a30" stroke-width="2"/></svg>
<div class="t" style="left:272.7px;top:421px;font-size:10.5px;color:#1a1a1a;transform:scaleX(0.806);">Search results</div>
<svg class="a" style="left:333px;top:423px" width="7" height="7" viewBox="0 0 7 7"><path d="M0.5 0.5L6.5 6.5M6.5 0.5L0.5 6.5" stroke="#808080" stroke-width="1.1"/></svg>
<div class="a" style="left:345px;top:417px;width:54px;height:18px;background:#f0f0f0;border-right:1px solid #dadada"></div>
<svg class="a" style="left:350px;top:419px" width="9" height="14" viewBox="0 0 9 14"><path d="M0.5 0.5H8.5V13.5H0.5Z" fill="#fafafa" stroke="#a8a8a8"/><path d="M2 10L3 6L7 1.5L8.5 3L4.5 8Z" fill="#e89030"/></svg>
<div class="t" style="left:363.0px;top:421px;font-size:10.5px;color:#1a1a1a;transform:scaleX(0.814);">Cccc</div>
<svg class="a" style="left:388px;top:423px" width="7" height="7" viewBox="0 0 7 7"><path d="M0.5 0.5L6.5 6.5M6.5 0.5L0.5 6.5" stroke="#808080" stroke-width="1.1"/></svg>
<div class="a" style="left:399px;top:417px;width:74px;height:18px;background:#fbfbfb;border-right:1px solid #dadada"></div>
<svg class="a" style="left:405px;top:420px" width="12" height="12" viewBox="0 0 12 12"><circle cx="6" cy="6" r="4.2" fill="none" stroke="#1e78d0" stroke-width="2.6" stroke-dasharray="1.6 1.1"/><circle cx="6" cy="6" r="3.2" fill="none" stroke="#1e78d0" stroke-width="1.6"/></svg>
<div class="t" style="left:419.0px;top:421px;font-size:10.5px;color:#1a1a1a;transform:scaleX(0.868);">Build log</div>
<svg class="a" style="left:461px;top:423px" width="7" height="7" viewBox="0 0 7 7"><path d="M0.5 0.5L6.5 6.5M6.5 0.5L0.5 6.5" stroke="#808080" stroke-width="1.1"/></svg>
<div class="a" style="left:473px;top:417px;width:97px;height:18px;background:#f0f0f0;border-right:1px solid #dadada"></div>
<svg class="a" style="left:478px;top:419px" width="11" height="13" viewBox="0 0 11 13"><path d="M5 0.5L10 5L5 9.5L1 5Z" fill="#d83838"/><path d="M3 8L1 12.5" stroke="#9a4a3a" stroke-width="1.3"/></svg>
<div class="t" style="left:490.5px;top:421px;font-size:10.5px;color:#1a1a1a;transform:scaleX(0.816);">Build messages</div>
<svg class="a" style="left:557px;top:423px" width="7" height="7" viewBox="0 0 7 7"><path d="M0.5 0.5L6.5 6.5M6.5 0.5L0.5 6.5" stroke="#808080" stroke-width="1.1"/></svg>
<div class="a" style="left:570px;top:417px;width:111px;height:18px;background:#f0f0f0;border-right:1px solid #dadada"></div>
<svg class="a" style="left:575px;top:419px" width="9" height="14" viewBox="0 0 9 14"><path d="M0.5 0.5H8.5V13.5H0.5Z" fill="#fafafa" stroke="#a8a8a8"/><path d="M2 10L3 6L7 1.5L8.5 3L4.5 8Z" fill="#e89030"/></svg>
<div class="t" style="left:587.0px;top:421px;font-size:10.5px;color:#1a1a1a;transform:scaleX(0.839);">CppCheck/Vera++</div>
<svg class="a" style="left:668px;top:423px" width="7" height="7" viewBox="0 0 7 7"><path d="M0.5 0.5L6.5 6.5M6.5 0.5L0.5 6.5" stroke="#808080" stroke-width="1.1"/></svg>
<div class="a" style="left:681px;top:417px;width:150px;height:18px;background:#f0f0f0;border-right:1px solid #dadada"></div>
<svg class="a" style="left:686px;top:419px" width="9" height="14" viewBox="0 0 9 14"><path d="M0.5 0.5H8.5V13.5H0.5Z" fill="#fafafa" stroke="#a8a8a8"/><path d="M2 10L3 6L7 1.5L8.5 3L4.5 8Z" fill="#e89030"/></svg>
<div class="t" style="left:698.5px;top:421px;font-size:10.5px;color:#1a1a1a;transform:scaleX(0.844);">CppCheck/Vera++ messages</div>
<svg class="a" style="left:819px;top:423px" width="7" height="7" viewBox="0 0 7 7"><path d="M0.5 0.5L6.5 6.5M6.5 0.5L0.5 6.5" stroke="#808080" stroke-width="1.1"/></svg>
<div class="a" style="left:831px;top:417px;width:65px;height:18px;background:#f0f0f0;border-right:1px solid #dadada"></div>
<svg class="a" style="left:837px;top:419px" width="9" height="14" viewBox="0 0 9 14"><path d="M0.5 0.5H8.5V13.5H0.5Z" fill="#fafafa" stroke="#a8a8a8"/><path d="M2 10L3 6L7 1.5L8.5 3L4.5 8Z" fill="#e89030"/></svg>
<div class="t" style="left:850.0px;top:421px;font-size:10.5px;color:#1a1a1a;transform:scaleX(0.837);">Cscope</div>
<svg class="a" style="left:885px;top:423px" width="7" height="7" viewBox="0 0 7 7"><path d="M0.5 0.5L6.5 6.5M6.5 0.5L0.5 6.5" stroke="#808080" stroke-width="1.1"/></svg>
<div class="a" style="left:896px;top:417px;width:76px;height:18px;background:#f0f0f0;border-right:1px solid #dadada"></div>
<svg class="a" style="left:902px;top:420px" width="12" height="12" viewBox="0 0 12 12"><circle cx="6" cy="6" r="4.2" fill="none" stroke="#1e78d0" stroke-width="2.6" stroke-dasharray="1.6 1.1"/><circle cx="6" cy="6" r="3.2" fill="none" stroke="#1e78d0" stroke-width="1.6"/></svg>
<div class="t" style="left:915.9px;top:421px;font-size:10.5px;color:#1a1a1a;transform:scaleX(0.837);">Debugger</div>
<svg class="a" style="left:961px;top:423px" width="7" height="7" viewBox="0 0 7 7"><path d="M0.5 0.5L6.5 6.5M6.5 0.5L0.5 6.5" stroke="#808080" stroke-width="1.1"/></svg>
<div class="a" style="left:972px;top:417px;width:52px;height:18px;background:#f0f0f0;border-right:1px solid #dadada"></div>
<svg class="a" style="left:979px;top:419px" width="9" height="14" viewBox="0 0 9 14"><path d="M0.5 0.5H8.5V13.5H0.5Z" fill="#fafafa" stroke="#a8a8a8"/><path d="M2 10L3 6L7 1.5L8.5 3L4.5 8Z" fill="#e89030"/></svg>
<div class="t" style="left:991.0px;top:421px;font-size:10.5px;color:#1a1a1a;transform:scaleX(0.838);">Doxyl</div>
<div class="a" style="left:1014px;top:418px;width:10px;height:15px;background:#f4f4f4;border:1px solid #c8c8c8"></div>
<svg class="a" style="left:1017px;top:423px" width="3" height="6" viewBox="0 0 3 6"><path d="M0 0L3 3L0 6Z" fill="#222"/></svg>
<div class="a" style="left:156px;top:435px;width:867px;height:91px;background:#ffffff;border:1px solid #b8b8b8"></div>
<div class="a" style="left:157px;top:436px;width:850px;height:5px;overflow:hidden"><div class="log" style="position:absolute;left:3px;top:-6px;color:#a03838">  If you have a complete installation...</div></div>
<div class="a log" style="left:160px;top:441.5px">Goto "Settings-&gt;Compiler...-&gt;Global compiler settings-&gt;GNU GCC Compiler-&gt;Toolchain executables" and fix the compiler's setup.

Tried to run compiler executable 'C:\MinGW/bin/gcc.exe', but failed!

Skipping...
<span style="color:#222">Nothing to be done (all items are up-to-date).</span></div>
<div class="a" style="left:1009px;top:436px;width:12px;height:89px;background:#f0f0f0;"></div>
<svg class="a" style="left:1011px;top:441px" width="8" height="5" viewBox="0 0 8 5"><path d="M0.5 4.5L4 1L7.5 4.5" fill="none" stroke="#333" stroke-width="1.2"/></svg>
<div class="a" style="left:1010px;top:469px;width:10px;height:42px;background:#cdcdcd;"></div>
<svg class="a" style="left:1011px;top:515px" width="8" height="5" viewBox="0 0 8 5"><path d="M0.5 0.5L4 4L7.5 0.5" fill="none" stroke="#333" stroke-width="1.2"/></svg>
<div class="a" style="left:0px;top:528px;width:1024px;height:19px;background:#f0f0f0;border-top:1px solid #d8d8d8"></div>
<div class="t" style="left:0.3px;top:535px;font-size:10.5px;color:#1a1a1a;transform:scaleX(0.858);">C:\Users\DTD\Downloads\nqn08\main.cpp</div>
<div class="a" style="left:354px;top:532px;width:78px;height:14px;background:#e2e2e2;border:1px solid #c0c0c0"></div>
<div class="t" style="left:356.6px;top:535px;font-size:10.5px;color:#1a1a1a;transform:scaleX(0.87);">C/C++</div>
<div class="t" style="left:435.8px;top:535px;font-size:10.5px;color:#1a1a1a;transform:scaleX(0.833);">Windows (CR+LF)</div>
<div class="a" style="left:516px;top:532px;width:1px;height:14px;background:#d4d4d4;"></div>
<div class="a" style="left:591px;top:532px;width:1px;height:14px;background:#d4d4d4;"></div>
<div class="a" style="left:728px;top:532px;width:1px;height:14px;background:#d4d4d4;"></div>
<div class="a" style="left:779px;top:532px;width:1px;height:14px;background:#d4d4d4;"></div>
<div class="a" style="left:827px;top:532px;width:1px;height:14px;background:#d4d4d4;"></div>
<div class="a" style="left:884px;top:532px;width:1px;height:14px;background:#d4d4d4;"></div>
<div class="a" style="left:960px;top:532px;width:1px;height:14px;background:#d4d4d4;"></div>
<div class="t" style="left:519.5px;top:535px;font-size:10.5px;color:#1a1a1a;transform:scaleX(0.813);">WINDOWS-1252</div>
<div class="t" style="left:597.0px;top:535px;font-size:10.5px;color:#1a1a1a;transform:scaleX(0.8);">Line 15, Col 14, Pos 256</div>
<div class="t" style="left:732.0px;top:535px;font-size:10.5px;color:#1a1a1a;transform:scaleX(0.838);">Insert</div>
<div class="t" style="left:783.0px;top:535px;font-size:10.5px;color:#1a1a1a;transform:scaleX(0.907);">Modified</div>
<div class="t" style="left:832.0px;top:535px;font-size:10.5px;color:#1a1a1a;transform:scaleX(0.831);">Read/Write</div>
<div class="t" style="left:888.0px;top:535px;font-size:10.5px;color:#1a1a1a;transform:scaleX(0.872);">default</div>
<svg class="a" style="left:987px;top:534px" width="12" height="9" viewBox="0 0 12 9"><rect width="12" height="9" fill="#c84848"/><rect y="1.3" width="12" height="1.3" fill="#f0e0e0"/><rect y="4" width="12" height="1.3" fill="#f0e0e0"/><rect y="6.6" width="12" height="1.3" fill="#f0e0e0"/><rect width="5.5" height="4.6" fill="#4a5aa8"/></svg>
<div class="a" style="left:0px;top:547px;width:1024px;height:29px;background:#121212;"></div>
<svg class="a" style="left:10px;top:557px" width="12" height="12" viewBox="0 0 12 12"><path d="M0 1.7L5 1V5.7H0ZM5.8 0.9L12 0V5.7H5.8ZM0 6.3H5V11L0 10.3ZM5.8 6.3H12V12L5.8 11.1Z" fill="#f4f4f4"/></svg>
<div class="a" style="left:34px;top:547px;width:259px;height:29px;background:#f3f3f3;"></div>
<svg class="a" style="left:43px;top:556px" width="13" height="13" viewBox="0 0 13 13"><circle cx="8" cy="5" r="4" fill="none" stroke="#222" stroke-width="1.2"/><path d="M5.2 7.8L0.8 12.2" stroke="#222" stroke-width="1.3"/></svg>
<div class="t" style="left:64.5px;top:557px;font-size:13px;color:#4a4a4a;transform:scaleX(0.831);">Type here to search</div>
<svg class="a" style="left:304px;top:556px" width="14" height="14" viewBox="0 0 14 14"><circle cx="7" cy="7" r="5.5" fill="none" stroke="#fff" stroke-width="1.6"/></svg>
<svg class="a" style="left:340px;top:553px" width="18" height="18" viewBox="0 0 18 18"><defs><linearGradient id="eg" x1="0" y1="0" x2="1" y2="1"><stop offset="0" stop-color="#45d07a"/><stop offset="0.5" stop-color="#1a9ae0"/><stop offset="1" stop-color="#1060b8"/></linearGradient></defs><circle cx="9" cy="9" r="8.5" fill="url(#eg)"/><path d="M5 11Q5 6 10 6Q14 6 14 9H7Q7 13 12 13Q14 13 16 12Q14 16 10 16Q5 16 5 11Z" fill="#0a3a80" opacity=".7"/></svg>
<svg class="a" style="left:377px;top:553px" width="18" height="18" viewBox="0 0 18 18"><path d="M1 5H17V17H1Z" fill="#f4f4f4"/><path d="M6 5V2.5Q6 1 9 1Q12 1 12 2.5V5" fill="none" stroke="#5ab0e8" stroke-width="1.3"/><rect x="6" y="8" width="3" height="3" fill="#f35325"/><rect x="9.5" y="8" width="3" height="3" fill="#81bc06"/><rect x="6" y="11.5" width="3" height="3" fill="#05a6f0"/><rect x="9.5" y="11.5" width="3" height="3" fill="#ffba08"/></svg>
<svg class="a" style="left:414px;top:554px" width="18" height="16" viewBox="0 0 18 16"><path d="M0.5 1H7L8.5 3H17.5V15H0.5Z" fill="#f8c848"/><path d="M0.5 5H17.5V15H0.5Z" fill="#fad870"/><rect x="5" y="9" width="8" height="6" fill="#3a8ad8"/></svg>
<svg class="a" style="left:451px;top:555px" width="18" height="14" viewBox="0 0 18 14"><path d="M0.5 4L9 0.5L17.5 4V13.5H0.5Z" fill="#0a6ad0"/><path d="M0.5 5L9 10L17.5 5V13.5H0.5Z" fill="#3a9ae8"/></svg>
<svg class="a" style="left:488px;top:554px" width="17" height="17" viewBox="0 0 17 17"><circle cx="8.5" cy="8.5" r="8" fill="#db4437"/><path d="M8.5 8.5L15.4 4.5A8 8 0 0 1 8.5 16.5Z" fill="#f4c20d"/><path d="M8.5 8.5L8.5 16.5A8 8 0 0 1 1.6 4.5Z" fill="#0f9d58"/><circle cx="8.5" cy="8.5" r="3.8" fill="#fff"/><circle cx="8.5" cy="8.5" r="3" fill="#4285f4"/></svg>
<div class="a" style="left:516px;top:548px;width:36px;height:28px;background:#333333;"></div>
<svg class="a" style="left:527px;top:553px" width="17" height="18" viewBox="0 0 17 18"><rect x="0" y="0" width="8" height="8.5" fill="#e03030"/><rect x="9" y="0" width="8" height="8" fill="#40b840"/><rect x="1" y="9" width="7" height="8.5" fill="#d8d030"/><rect x="9" y="9" width="7" height="7" fill="#5a2ac0"/></svg>
<svg class="a" style="left:562px;top:553px" width="19" height="18" viewBox="0 0 19 18"><path d="M9.5 0.8C14.5 0.8 18.2 4 18.2 8.2C18.2 12.4 14.5 15.5 9.5 15.5C7.5 15.5 5.5 15 4 14L1.5 16.5L2.5 12.5C1.4 11.3 0.8 9.8 0.8 8.2C0.8 4 4.5 0.8 9.5 0.8Z" fill="#f8fbff" stroke="#1a5ad8" stroke-width="1.2"/><text x="4" y="10.5" font-size="5.5" font-weight="bold" fill="#3a78d8" font-family="Liberation Sans">Zalo</text></svg>
<svg class="a" style="left:699px;top:555px" width="18" height="14" viewBox="0 0 18 14"><circle cx="6" cy="5" r="4" fill="#f0d050"/><path d="M3 13Q0 13 0 10Q0 7 3.5 7Q5 4 9 4Q13 4 14 8Q17 8 17 10.5Q17 13 14 13Z" fill="#d8e8f8" stroke="#a8c0d8" stroke-width=".6"/></svg>
<div class="t" style="left:722.6px;top:557px;font-size:12px;color:#f0f0f0;transform:scaleX(0.851);">18°C</div>
<div class="t" style="left:752.0px;top:557px;font-size:12px;color:#f0f0f0;transform:scaleX(0.859);">Mưa rào</div>
<svg class="a" style="left:802px;top:558px" width="10" height="6" viewBox="0 0 10 6"><path d="M0.5 5.5L5 1L9.5 5.5" fill="none" stroke="#f0f0f0" stroke-width="1.2"/></svg>
<svg class="a" style="left:820px;top:553px" width="10" height="17" viewBox="0 0 10 17"><ellipse cx="5" cy="8.5" rx="5" ry="8.5" fill="#2a7ae0"/><path d="M2.5 5.5L7.5 10.5L5 13V4L7.5 6.5L2.5 11.5" fill="none" stroke="#fff" stroke-width=".9"/></svg>
<svg class="a" style="left:838px;top:558px" width="13" height="8" viewBox="0 0 13 8"><rect x="0.5" y="0.5" width="10.5" height="7" fill="none" stroke="#d8d8d8" stroke-width="1"/><rect x="2" y="2" width="4" height="4" fill="#e0e0e0"/><rect x="11.5" y="2.5" width="1.5" height="3" fill="#d8d8d8"/></svg>
<svg class="a" style="left:856px;top:557px" width="14" height="11" viewBox="0 0 14 11"><path d="M0.5 4H3L6.5 1V11L3 8H0.5Z" fill="none" stroke="#f0f0f0" stroke-width="1.1"/><path d="M9 3.5Q10.5 6 9 8.5M11.5 2Q13.5 6 11.5 10" fill="none" stroke="#f0f0f0" stroke-width="1.1"/></svg>
<svg class="a" style="left:873px;top:555px" width="13" height="14" viewBox="0 0 13 14"><rect x="0" y="0" width="13" height="14" fill="#f0d8dc"/><path d="M3 3L6.5 11.5L10 3" fill="none" stroke="#c83048" stroke-width="1.7"/></svg>
<svg class="a" style="left:892px;top:556px" width="15" height="13" viewBox="0 0 15 13"><path d="M1 12A11 11 0 0 1 12 1M4 12A8 8 0 0 1 12 4M7 12A5 5 0 0 1 12 7" fill="none" stroke="#d8d8d8" stroke-width="1.2"/><circle cx="12" cy="11" r="1.8" fill="#f0f0f0"/></svg>
<div class="t" style="left:912.0px;top:557px;font-size:12px;color:#f0f0f0;transform:scaleX(0.692);">ENG</div>
<div class="t" style="left:944.0px;top:550px;font-size:11.5px;color:#f0f0f0;transform:scaleX(0.782);">9:50 AM</div>
<div class="t" style="left:939.5px;top:563px;font-size:11.5px;color:#f0f0f0;transform:scaleX(0.738);">13/02/2022</div>
<svg class="a" style="left:994px;top:553px" width="20" height="19" viewBox="0 0 20 19"><path d="M0.5 0.5H15.5V11.5H6L3 14.5V11.5H0.5Z" fill="#f0f0f0"/><path d="M3 3.5H13M3 6H13M3 8.5H10" stroke="#121212" stroke-width=".9"/><circle cx="13.5" cy="13" r="5.5" fill="#121212" stroke="#f0f0f0" stroke-width="1"/><text x="10.8" y="16.5" font-size="9" fill="#f0f0f0" font-family="Liberation Sans">6</text></svg>
</body></html>
